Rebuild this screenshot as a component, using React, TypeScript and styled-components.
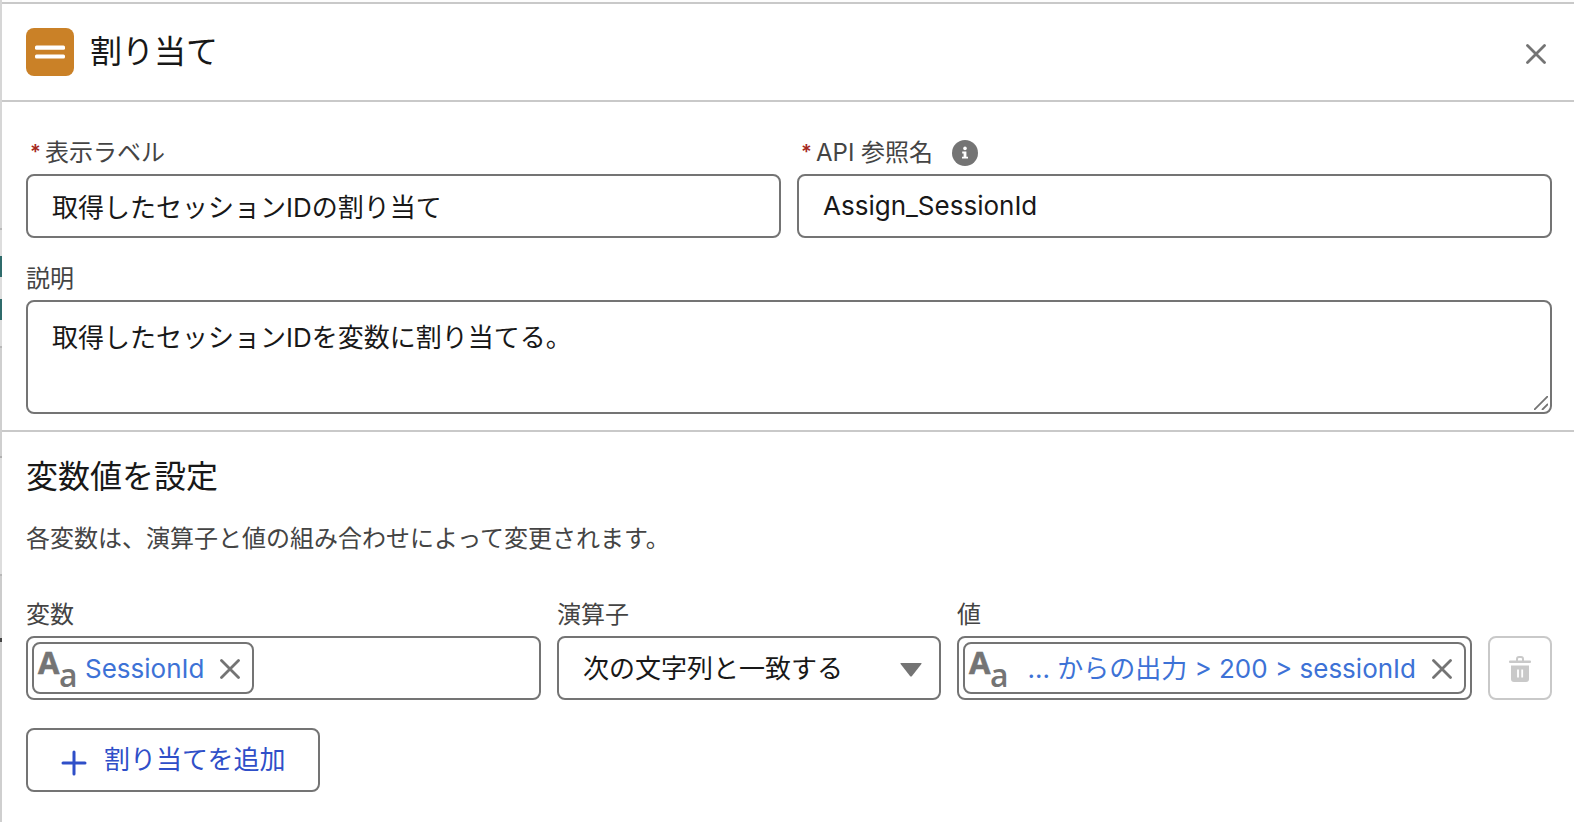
import React, { useState } from "react";
import styled, { createGlobalStyle } from "styled-components";

const color = {
  text: "#181818",
  label: "#444444",
  border: "#747474",
  line: "#c9c9c9",
  link: "#3d72d6",
  brand: "#2f4fc8",
  required: "#a6281c",
  accent: "#ca8127",
};

const GlobalStyle = createGlobalStyle`
  *, *::before, *::after { box-sizing: border-box; }
  body {
    margin: 0;
    background: #fdfdfd;
    color: ${color.text};
    font-family: Inter, "Noto Sans CJK JP", sans-serif;
  }
  input, textarea, select, button { font: inherit; color: inherit; }
`;

const Page = styled.div`
  display: flex;
  min-height: 100vh;
`;

/* Sliver of the flow canvas that stays visible beside the panel. */
const CanvasEdge = styled.div`
  flex: 0 0 2px;
  display: flex;
  flex-direction: column;
  background: #cfcfcf;
`;

const EdgePart = styled.span<{ $height: number; $fill: string }>`
  height: ${(p) => p.$height}px;
  background: ${(p) => p.$fill};
`;

const Panel = styled.main`
  flex: 1;
  min-width: 0;
  margin-top: 2px;
  border-top: 2px solid ${color.line};
  background: #fff;
`;

const Header = styled.header`
  display: flex;
  align-items: center;
  gap: 16px;
  height: 98px;
  padding: 0 22px 0 24px;
  border-bottom: 2px solid ${color.line};
`;

const ElementIcon = styled.svg`
  flex: none;
  width: 48px;
  height: 48px;
`;

const Title = styled.h1`
  flex: 1;
  margin: 0;
  font-size: 32px;
  font-weight: 400;
  line-height: 48px;
`;

const IconButton = styled.button<{ $size: number }>`
  flex: none;
  display: flex;
  align-items: center;
  justify-content: center;
  width: ${(p) => p.$size}px;
  height: ${(p) => p.$size}px;
  padding: 0;
  border: 0;
  background: none;
  cursor: pointer;
`;

const CloseButton = styled(IconButton)`
  margin-top: 4px;
`;

const Section = styled.section<{ $divider?: boolean }>`
  padding: ${(p) => (p.$divider ? 32 : 25)}px 22px 16px 24px;
  border-bottom: ${(p) => (p.$divider ? `2px solid ${color.line}` : "0")};
`;

const NameGrid = styled.div`
  display: grid;
  grid-template-columns: 1fr 1fr;
  gap: 16px;
  margin-bottom: 22px;
`;

const AssignmentGrid = styled.div`
  display: grid;
  grid-template-columns: 1fr 384px 1fr 64px;
  align-items: end;
  gap: 16px;
  margin-bottom: 28px;
`;

const Field = styled.div`
  display: flex;
  flex-direction: column;
  min-width: 0;
`;

const LabelRow = styled.div`
  display: flex;
  align-items: center;
  gap: 19px;
  height: 38px;
  margin-bottom: 2px;
`;

const Label = styled.label`
  font-size: 24px;
  line-height: 32px;
  color: ${color.label};
`;

const Required = styled.abbr`
  display: inline-block;
  width: 19px;
  padding-left: 4px;
  color: ${color.required};
  font-size: 20px;
  font-weight: 600;
  line-height: 24px;
  vertical-align: 2px;
  text-decoration: none;
`;

const TextInput = styled.input`
  width: 100%;
  height: 64px;
  padding: 0 24px 2px;
  border: 2px solid ${color.border};
  border-radius: 8px;
  background: #fff;
  font-size: 26px;
`;

const AreaWrap = styled.div`
  position: relative;
  display: flex;
`;

const TextArea = styled.textarea`
  width: 100%;
  height: 114px;
  padding: 16px 24px;
  border: 2px solid ${color.border};
  border-radius: 8px;
  background: #fff;
  font-size: 26px;
  line-height: 40px;
  resize: none;
`;

const Grip = styled.svg`
  position: absolute;
  right: 4px;
  bottom: 4px;
  width: 14px;
  height: 14px;
  pointer-events: none;
`;

const SectionTitle = styled.h2`
  margin: 0 0 26px;
  font-size: 32px;
  font-weight: 400;
  line-height: 40px;
`;

const Hint = styled.p`
  margin: 0 0 41px;
  font-size: 24px;
  line-height: 32px;
  color: ${color.label};
`;

const PillBox = styled.div`
  display: flex;
  align-items: center;
  height: 64px;
  padding: 0 4px;
  border: 2px solid ${color.border};
  border-radius: 8px;
  background: #fff;
`;

const Pill = styled.div<{ $fill?: boolean }>`
  flex: ${(p) => (p.$fill ? "1 1 0" : "none")};
  min-width: 0;
  display: flex;
  align-items: center;
  height: 52px;
  padding: 2px 8px 0 4px;
  border: 2px solid ${color.border};
  border-radius: 8px;
`;

const TypeIcon = styled.svg`
  flex: none;
  width: 38px;
  height: 46px;
  overflow: visible;
  fill: ${color.border};
  font-family: "Open Sans", "Noto Sans", sans-serif;
`;

const PillText = styled.a`
  flex: 1;
  min-width: 0;
  margin: 0 12px 0 9px;
  color: ${color.link};
  font-size: 26px;
  line-height: 40px;
  text-align: right;
  text-decoration: none;
  white-space: nowrap;
`;

const PillInput = styled.input`
  flex: 1;
  min-width: 0;
  height: 48px;
  border: 0;
  outline: 0;
  background: none;
`;

const SelectWrap = styled.div`
  position: relative;
  display: flex;
`;

const Select = styled.select`
  appearance: none;
  width: 100%;
  height: 64px;
  padding: 0 56px 0 24px;
  border: 2px solid ${color.border};
  border-radius: 8px;
  background: #fff;
  font-size: 26px;
`;

const Arrow = styled.svg`
  position: absolute;
  right: 19px;
  top: 27px;
  width: 22px;
  height: 14px;
  pointer-events: none;
`;

const DeleteButton = styled.button`
  display: flex;
  align-items: center;
  justify-content: center;
  width: 64px;
  height: 64px;
  padding: 2px 0 0;
  border: 2px solid ${color.line};
  border-radius: 8px;
  background: #fff;
`;

const AddButton = styled.button`
  display: inline-flex;
  align-items: center;
  gap: 17px;
  height: 64px;
  padding: 0 33px;
  border: 2px solid ${color.border};
  border-radius: 8px;
  background: #fff;
  color: ${color.brand};
  font-size: 26px;
  line-height: 40px;
  cursor: pointer;
`;

const PlusIcon = styled.svg`
  width: 26px;
  height: 26px;
  margin-top: 6px;
`;

const Cross = () => (
  <svg width="20" height="20" viewBox="0 0 20 20" aria-hidden="true">
    <path d="M1.5 1.5 18.5 18.5M18.5 1.5 1.5 18.5" stroke={color.border} strokeWidth="2.8" strokeLinecap="round" />
  </svg>
);

const TextTypeIcon = () => (
  <TypeIcon viewBox="0 0 38 46" aria-hidden="true">
    <text x="0" y="28" fontSize="31" fontWeight="700" stroke={color.border} strokeWidth="0.6">A</text>
    <text x="21" y="41" fontSize="32" fontWeight="600">a</text>
  </TypeIcon>
);

const edgeParts: [number, string][] = [
  [228, "#d6d6d6"],
  [2, "#b8b8b8"],
  [26, "#dddddd"],
  [21, "#2f6b6b"],
  [22, "#dddddd"],
  [21, "#2f6b6b"],
  [26, "#dddddd"],
  [2, "#b8b8b8"],
  [108, "#cfcfcf"],
  [2, "#b0b0b0"],
  [116, "#dddddd"],
  [2, "#b8b8b8"],
  [62, "#cccccc"],
  [4, "#444444"],
];

export default function App() {
  const [label, setLabel] = useState("取得したセッションIDの割り当て");
  const [apiName, setApiName] = useState("Assign_SessionId");
  const [description, setDescription] = useState("取得したセッションIDを変数に割り当てる。");

  return (
    <>
      <GlobalStyle />
      <Page lang="ja">
        <CanvasEdge>
          {edgeParts.map(([height, fill], i) => (
            <EdgePart key={i} $height={height} $fill={fill} />
          ))}
        </CanvasEdge>
        <Panel>
          <Header>
            <ElementIcon viewBox="0 0 48 48" aria-hidden="true">
              <rect width="48" height="48" rx="8" fill={color.accent} />
              <rect x="9" y="17.6" width="30" height="4.2" rx="1.5" fill="#fff" />
              <rect x="9" y="26.4" width="30" height="4.2" rx="1.5" fill="#fff" />
            </ElementIcon>
            <Title>割り当て</Title>
            <CloseButton type="button" aria-label="閉じる" $size={32}>
              <Cross />
            </CloseButton>
          </Header>

          <Section $divider>
            <NameGrid>
              <Field>
                <LabelRow>
                  <Label htmlFor="label">
                    <Required title="必須">*</Required>表示ラベル
                  </Label>
                </LabelRow>
                <TextInput id="label" value={label} onChange={(e) => setLabel(e.target.value)} />
              </Field>
              <Field>
                <LabelRow>
                  <Label htmlFor="api-name">
                    <Required title="必須">*</Required>API 参照名
                  </Label>
                  <IconButton type="button" aria-label="ヘルプ" $size={26}>
                    <svg width="26" height="26" viewBox="0 0 26 26" aria-hidden="true">
                      <circle cx="13" cy="13" r="13" fill={color.border} />
                      <circle cx="13" cy="8.4" r="1.8" fill="#fff" />
                      <path d="M10.2 11.6h4.2v5.2h1.6v1.8h-6v-1.8h1.6v-3.4h-1.4z" fill="#fff" />
                    </svg>
                  </IconButton>
                </LabelRow>
                <TextInput id="api-name" value={apiName} onChange={(e) => setApiName(e.target.value)} />
              </Field>
            </NameGrid>
            <Field>
              <LabelRow>
                <Label htmlFor="description">説明</Label>
              </LabelRow>
              <AreaWrap>
                <TextArea id="description" value={description} onChange={(e) => setDescription(e.target.value)} />
                <Grip viewBox="0 0 14 14" aria-hidden="true">
                  <path d="M0 14 14 0M8 14 14 8" stroke={color.border} strokeWidth="1.8" />
                </Grip>
              </AreaWrap>
            </Field>
          </Section>

          <Section>
            <SectionTitle>変数値を設定</SectionTitle>
            <Hint>各変数は、演算子と値の組み合わせによって変更されます。</Hint>
            <AssignmentGrid>
              <Field>
                <LabelRow>
                  <Label htmlFor="variable">変数</Label>
                </LabelRow>
                <PillBox>
                  <Pill>
                    <TextTypeIcon />
                    <PillText href="#variable">SessionId</PillText>
                    <IconButton type="button" aria-label="変数をクリア" $size={28}>
                      <Cross />
                    </IconButton>
                  </Pill>
                  <PillInput id="variable" />
                </PillBox>
              </Field>
              <Field>
                <LabelRow>
                  <Label htmlFor="operator">演算子</Label>
                </LabelRow>
                <SelectWrap>
                  <Select id="operator" defaultValue="assign">
                    <option value="assign">次の文字列と一致する</option>
                  </Select>
                  <Arrow viewBox="0 0 22 14" aria-hidden="true">
                    <path d="M1 0h20q1 0 .4 1L12 13q-1 1-2 0L.6 1Q0 0 1 0z" fill={color.border} />
                  </Arrow>
                </SelectWrap>
              </Field>
              <Field>
                <LabelRow>
                  <Label as="span" id="value-label">値</Label>
                </LabelRow>
                <PillBox role="group" aria-labelledby="value-label">
                  <Pill $fill>
                    <TextTypeIcon />
                    <PillText href="#value">... からの出力 &gt; 200 &gt; sessionId</PillText>
                    <IconButton type="button" aria-label="値をクリア" $size={28}>
                      <Cross />
                    </IconButton>
                  </Pill>
                </PillBox>
              </Field>
              <DeleteButton type="button" aria-label="削除" disabled>
                <svg width="22" height="26" viewBox="0 0 22 26" aria-hidden="true">
                  <path d="M8 5V3q0-2 2-2h2q2 0 2 2v2" fill="none" stroke={color.line} strokeWidth="2" />
                  <rect x="0" y="4.5" width="22" height="2.6" rx="1" fill={color.line} />
                  <path d="M2 9.5h18V23q0 3-3 3H5q-3 0-3-3z" fill={color.line} />
                  <path d="M9 13.5v8M13.2 13.5v8" stroke="#fff" strokeWidth="1.8" />
                </svg>
              </DeleteButton>
            </AssignmentGrid>
            <AddButton type="button">
              <PlusIcon viewBox="0 0 26 26" aria-hidden="true">
                <path d="M13 2v22M2 13h22" stroke={color.brand} strokeWidth="3" strokeLinecap="round" />
              </PlusIcon>
              割り当てを追加
            </AddButton>
          </Section>
        </Panel>
      </Page>
    </>
  );
}
